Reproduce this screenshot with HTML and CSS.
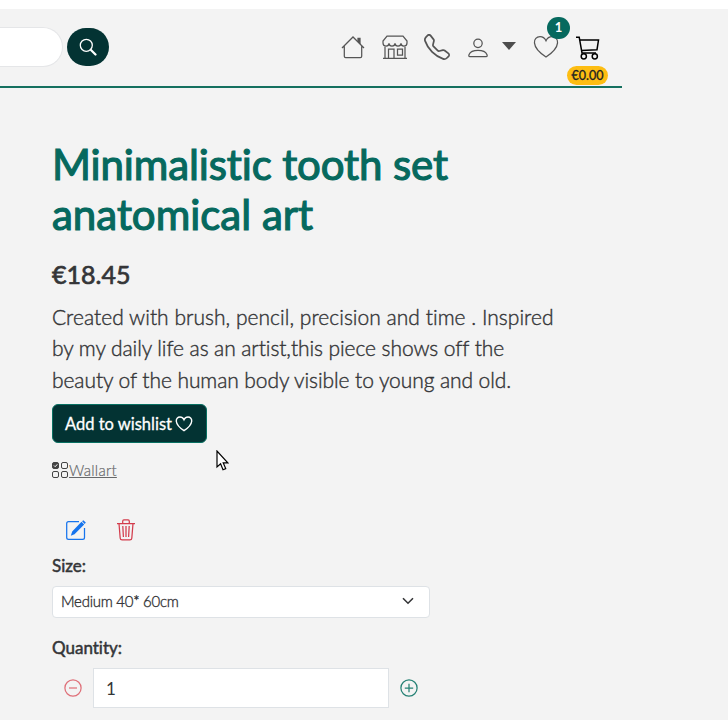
FILE: index.html
```html
<!DOCTYPE html>
<html lang="en">
<head>
<meta charset="utf-8">
<title>Minimalistic tooth set anatomical art</title>
<link rel="stylesheet" href="styles.css">
</head>
<body>
<header class="header">
  <div class="search"></div>
  <button class="search-btn" aria-label="Search"><svg width="18" height="18" viewBox="0 0 18 18"><circle cx="7.3" cy="7.3" r="6" fill="none" stroke="currentColor" stroke-width="1.3"/><path d="M12 12l4.5 4.5" stroke="currentColor" stroke-width="2.2" stroke-linecap="round"/></svg></button>
  <nav class="nav">
    <a class="item"><svg width="24" height="24" viewBox="0 0 24 24"><path d="M1 13 12 2l11 11M3.3 11v10.2c0 .8.6 1.4 1.4 1.4h14.6c.8 0 1.4-.6 1.4-1.4V11"/><path d="M17 3.3h2v5l-2-2z" fill="currentColor"/></svg></a>
    <a class="item"><svg width="26" height="26" viewBox="0 0 26 26"><path d="M5 2h16l4 5v2c0 4-5.8 4-6 .4-.2 3.6-5.8 3.6-6 0-.2 3.6-5.8 3.6-6 0C6.800 13 1 13 1 9V7zM3 13v11M23 13v11M1 24.300h24M6.500 24v-9h5.500v9M15.500 15h5v6h-5z"/></svg></a>
    <a class="item"><svg width="26" height="26" viewBox="0 0 16 16"><path class="solid" d="M3.654 1.328a.678.678 0 0 0-1.015-.063L1.605 2.300c-.483.484-.661 1.169-.45 1.770a17.600 17.600 0 0 0 4.168 6.608 17.600 17.600 0 0 0 6.608 4.168c.601.211 1.286.033 1.770-.45l1.034-1.034a.678.678 0 0 0-.063-1.015l-2.307-1.794a.68.68 0 0 0-.58-.122l-2.190.547a1.750 1.750 0 0 1-1.657-.459L5.482 8.062a1.750 1.750 0 0 1-.46-1.657l.548-2.190a.68.68 0 0 0-.122-.58zM1.884.511a1.745 1.745 0 0 1 2.612.163L6.290 2.980c.329.423.445.974.315 1.494l-.547 2.190a.68.68 0 0 0 .178.643l2.457 2.457a.68.68 0 0 0 .644.178l2.189-.547a1.750 1.750 0 0 1 1.494.315l2.306 1.794c.829.645.905 1.870.163 2.611l-1.034 1.034c-.74.740-1.846 1.065-2.877.702a18.600 18.600 0 0 1-7.010-4.420 18.600 18.600 0 0 1-4.420-7.009c-.362-1.030-.037-2.137.703-2.877z"/></svg></a>
    <a class="item user"><svg width="20" height="20" viewBox="0 0 20 20"><circle cx="10" cy="5.300" r="4.200"/><path d="M2 18.700c-1.600 0-1.200-1.500-.9-2.300C2.300 13.600 5.300 12.300 10 12.300s7.700 1.300 8.900 4.100c.3.800.7 2.300-.9 2.300z"/></svg></a>
    <span class="caret"></span>
    <a class="item heart"><svg width="26" height="24" viewBox="0 0 26 24"><path d="M13 22C-3 11.500.2 1.600 7 1.600c3 0 5 2 6 4.100 1-2.100 3-4.100 6-4.100 6.800 0 10 9.900-6 20.400z"/></svg><span class="count">1</span></a>
    <a class="item cart"><svg width="24" height="24" viewBox="0 0 24 24"><path d="M0 1.200h3.200L6 17h14M4 4h18.500L21 13.700 5.500 14.400"/><circle cx="7.800" cy="20.300" r="2.600"/><circle cx="18.800" cy="20.300" r="2.600"/></svg><span class="total">€0.00</span></a>
  </nav>
</header>
<main class="product">
  <h1><span class="tight">Minimalistic tooth set</span> anatomical art</h1>
  <p class="price">€18.45</p>
  <p class="lead">Created with brush, pencil, precision and time . Inspired <span class="snug">by my daily life as an artist,this piece shows off the beauty of the human body visible to young and old.</span></p>
  <button class="wish">Add to wishlist<svg width="18" height="16" viewBox="0 0 26 24"><path d="M13 22C-3 11.500.2 1.600 7 1.600c3 0 5 2 6 4.100 1-2.100 3-4.100 6-4.100 6.800 0 10 9.900-6 20.400z" stroke-width="2.100"/></svg></button>
  <p class="category"><svg width="16" height="16" viewBox="0 0 16 16"><rect x=".5" y=".5" width="6" height="6" rx="1.500" fill="currentColor"/><path d="M2 3.500l1.200 1.200L5.300 2.300" stroke="#fff"/><rect x="9.500" y=".5" width="6" height="6" rx="1.500"/><rect x=".5" y="9.500" width="6" height="6" rx="1.500"/><rect x="9.500" y="9.500" width="6" height="6" rx="1.500"/></svg><a>Wallart</a></p>
  <div class="actions">
    <svg class="edit" width="20" height="20" viewBox="0 0 20 20"><path d="M13 1.600H2.600c-1 0-1.900.8-1.900 1.900v13.900c0 1 .9 1.900 1.900 1.900h14c1 0 1.900-.9 1.900-1.900V8"/><path class="solid" d="M15.500 1.800l2.700 2.700-9.700 9.700-3.700 1.500 1.400-4.100zM17.300.2l2.500 2.400-1.100 1.300-2.600-2.600z"/></svg>
    <svg class="trash" width="18" height="22" viewBox="0 0 18 22"><path d="M0 4.500h18M5.700 4.300V2.200c0-.8.500-1.300 1.200-1.300h4.200c.7 0 1.200.5 1.200 1.300v2.100M2 4.500l1.200 14.700c.1 1.100.8 1.700 1.900 1.700h7.800c1.100 0 1.800-.6 1.900-1.700L16 4.500M5.800 7l.6 11M9 7v11M12.200 7l-.6 11"/></svg>
  </div>
  <label>Size:</label>
  <div class="select">Medium 40* 60cm<svg width="12" height="8" viewBox="0 0 12 8"><path d="M1 1.200l5 5 5-5" stroke-width="1.600"/></svg></div>
  <label>Quantity:</label>
  <div class="quantity">
    <svg class="minus" width="18" height="18" viewBox="0 0 18 18"><path d="M5 9h8"/><circle cx="9" cy="9" r="8.100"/></svg>
    <div class="amount">1</div>
    <svg class="plus" width="18" height="18" viewBox="0 0 18 18"><path d="M4.800 9h8.400M9 4.800v8.400"/><circle cx="9" cy="9" r="8.100"/></svg>
  </div>
</main>
<svg class="cursor" width="13" height="21" viewBox="0 0 13 21"><path d="M1 1v16l3.600-3.300 2.400 6 2.700-1.100-2.500-5.800h4.600z" fill="#fff" stroke="#000" stroke-width="1.200"/></svg>
</body>
</html>
```
FILE: styles.css
```css
* { box-sizing: border-box; }
body { margin: 0; height: 720px; overflow: hidden; background: #f3f3f3; border-top: 9px solid #fff; color: #343537; font-family: Lato, sans-serif; font-size: 17px; font-variant-ligatures: none; }
svg { display: block; flex: none; fill: none; stroke: currentColor; stroke-width: 1.25; }
svg .solid { fill: currentColor; stroke: none; }
h1, p { margin: 0; font-weight: 400; }
button { font: inherit; border: 0; padding: 0; font-variant-ligatures: none; }

.header { display: flex; width: 622px; height: 79px; border-bottom: 2px solid #14705f; padding-top: 18px; }
.search { width: 63px; height: 40px; background: #fff; border: 1px solid #e5e6e8; border-left: 0; border-radius: 0 20px 20px 0; }
.search-btn { display: flex; align-items: center; justify-content: center; width: 42px; height: 38px; margin: 1px 0 0 4px; border-radius: 19px; background: #033333; color: #fff; }
.nav { display: flex; align-items: center; height: 40px; margin-left: 232px; color: #555; }
.item { position: relative; margin-right: 17px; }
.item:nth-child(2) { margin-right: 16px; }
.item.user { margin: 1px 14px 0 1px; }
.caret { border: 7px solid transparent; border-top: 8px solid #4d4d4d; border-bottom: 0; margin: -2px 17px 0 0; }
.item.cart { color: #000; margin: 2px 0 0; }
.cart svg { stroke-width: 1.500; }
.count { position: absolute; left: 14px; top: -18px; width: 23px; height: 22px; border-radius: 11px; background: #06695e; color: #fff; font-size: 13px; font-weight: 700; line-height: 21px; text-align: center; }
.total { position: absolute; left: -9px; top: 30px; width: 41px; height: 19px; border-radius: 10px; background: #fdbd12; color: #222; font-size: 12.500px; line-height: 19px; text-align: center; -webkit-text-stroke: .3px; }

.product { width: 514px; margin: 51px 0 0 52px; }
h1 { font-size: 42px; line-height: 50.400px; color: #06695e; -webkit-text-stroke: 1.200px; }
.tight { letter-spacing: -.12px; }
.price { margin-top: 19px; font-size: 25px; line-height: 31px; -webkit-text-stroke: .700px; }
.lead { margin-top: 11px; font-size: 21px; font-weight: 300; line-height: 31.500px; letter-spacing: .03px; -webkit-text-stroke: .4px; }
.snug { letter-spacing: -.08px; }
.wish { display: flex; align-items: center; gap: 3px; width: 155px; height: 39px; margin-top: 9px; padding-left: 12px; border: 1px solid #087062; border-radius: 6px; background: #033333; color: #fff; font-size: 16.500px; white-space: nowrap; -webkit-text-stroke: .300px; }
.category { display: flex; align-items: center; gap: 1px; margin-top: 17px; height: 20px; font-size: 15px; font-weight: 300; letter-spacing: .25px; color: #66686a; -webkit-text-stroke: .2px; }
.category svg { color: #444; stroke-width: 1; }
.category a { text-decoration: underline; }
.actions { display: flex; align-items: center; gap: 31px; height: 22px; margin: 39px 0 15px 14px; }
.edit { color: #1674ed; }
.trash { color: #d33c4c; }
label { display: block; height: 20px; font-size: 17px; line-height: 20px; -webkit-text-stroke: .500px; }
.select { display: flex; align-items: center; justify-content: space-between; width: 378px; height: 32px; margin: 10px 0 20px; padding: 0 15px 2px 8px; border: 1px solid #dee2e6; border-radius: 4px; background: #fff; font-size: 15px; font-weight: 300; letter-spacing: -.27px; -webkit-text-stroke: .35px; }
.quantity { display: flex; align-items: center; width: 378px; height: 40px; margin-top: 10px; padding-left: 12px; }
.amount { width: 296px; height: 40px; margin: 0 11px; padding-left: 12px; border: 1px solid #dee2e6; background: #fff; font-size: 17px; line-height: 39px; }
.minus { color: #df7079; }
.plus { color: #258174; }
.cursor { position: absolute; left: 216px; top: 450px; }
```
